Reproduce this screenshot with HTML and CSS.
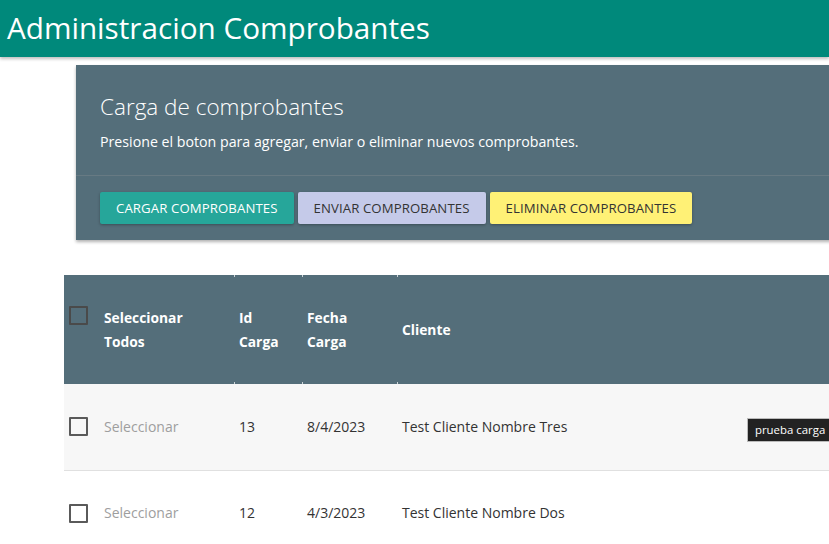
FILE: index.html
```html
<!DOCTYPE html>
<html lang="es">
<head>
<meta charset="utf-8">
<title>Administracion Comprobantes</title>
<link rel="stylesheet" href="styles.css">
</head>
<body>
<header class="topbar">
  <h1 class="topbar-title">Administracion Comprobantes</h1>
</header>
<main class="main">
  <section class="card">
    <div class="card-content">
      <h2 class="card-title">Carga de comprobantes</h2>
      <p class="card-text">Presione el boton para agregar, enviar o eliminar nuevos comprobantes.</p>
    </div>
    <div class="card-action">
      <button class="btn btn-teal">CARGAR COMPROBANTES</button>
      <button class="btn btn-indigo">ENVIAR COMPROBANTES</button>
      <button class="btn btn-yellow">ELIMINAR COMPROBANTES</button>
    </div>
  </section>
  <table class="grid">
    <thead>
      <tr>
        <th class="col-check"><span class="check check-head"></span></th>
        <th class="col-sel">Seleccionar<br>Todos</th>
        <th class="col-id tick">Id<br>Carga</th>
        <th class="col-fecha tick">Fecha<br>Carga</th>
        <th class="col-cliente tick">Cliente</th>
        <th class="col-rest"></th>
      </tr>
    </thead>
    <tbody>
      <tr class="row-alt">
        <td class="col-check"><span class="check"></span></td>
        <td class="col-sel muted">Seleccionar</td>
        <td class="col-id">13</td>
        <td class="col-fecha">8/4/2023</td>
        <td class="col-cliente">Test Cliente Nombre Tres</td>
        <td class="col-rest"><span class="tooltip">prueba carga</span></td>
      </tr>
      <tr>
        <td class="col-check"><span class="check"></span></td>
        <td class="col-sel muted">Seleccionar</td>
        <td class="col-id">12</td>
        <td class="col-fecha">4/3/2023</td>
        <td class="col-cliente">Test Cliente Nombre Dos</td>
        <td class="col-rest"></td>
      </tr>
    </tbody>
  </table>
</main>
</body>
</html>
```
FILE: styles.css
```css
* { box-sizing: border-box; }
html, body { margin: 0; padding: 0; }
body {
  font-family: "Open Sans", "Noto Sans", sans-serif;
  color: #333;
  background: #fff;
  overflow: hidden;
  width: 829px;
}
.topbar {
  height: 57px;
  background: #00897b;
  box-shadow: 0 2px 3px rgba(0,0,0,0.25);
  padding: 0 7px;
  display: flex;
  align-items: center;
  position: relative;
  z-index: 2;
}
.topbar-title {
  margin: 0 0 3px;
  font-weight: 400;
  font-size: 29.7px;
  color: #fff;
}
.main {
  padding-top: 8px;
}
.card {
  margin-left: 76px;
  width: 800px;
  background: #546e7a;
  box-shadow: 0 2px 3px rgba(0,0,0,0.3);
  color: #fff;
}
.card-content {
  padding: 27px 24px 23px;
  border-bottom: 1px solid rgba(160,160,160,0.25);
}
.card-title {
  margin: 0;
  font-weight: 300;
  font-size: 22.5px;
  line-height: 30px;
}
.card-text {
  margin: 10px 0 0;
  font-size: 14.2px;
  line-height: 20px;
}
.card-action {
  padding: 16px 24px;
  display: flex;
  gap: 4px;
}
.btn {
  height: 32px;
  border: 0;
  border-radius: 2px;
  padding: 0 16px;
  font-family: inherit;
  font-size: 13.2px;
  letter-spacing: 0.1px;
  box-shadow: 0 1px 3px rgba(0,0,0,0.3);
}
.btn-teal { background: #26a69a; color: #fff; }
.btn-indigo { background: #c5cae9; color: #333; }
.btn-yellow { background: #fff176; color: #333; }
.grid {
  margin: 35px 0 0 64px;
  width: 780px;
  border-collapse: collapse;
  font-size: 14px;
}
.grid th, .grid td { padding: 0 0 0 5px; }
.grid thead th {
  background: #546e7a;
  color: #fff;
  font-weight: 700;
  text-align: left;
  height: 109px;
  line-height: 24px;
  vertical-align: middle;
  font-size: 13.8px;
  position: relative;
}
.tick::before, .tick::after {
  content: "";
  position: absolute;
  left: 0;
  width: 1px;
  height: 2px;
  background: rgba(255,255,255,0.7);
}
.tick::before { top: 0; }
.tick::after { bottom: 0; }
.grid td {
  height: 86px;
  vertical-align: middle;
  border-bottom: 1px solid #e0e0e0;
  line-height: 20px;
}
.row-alt td { background: #f7f7f7; }
.col-check { width: 35px; }
.col-sel { width: 135px; }
.col-id { width: 68px; }
.col-fecha { width: 95px; }
.col-cliente { width: 300px; }
.col-rest { position: relative; }
.check {
  display: block;
  width: 19px;
  height: 19px;
  border: 2px solid #5a5a5a;
  border-radius: 1px;
}
.check-head { margin-top: -24px; border-color: #4a4a4a; }
.muted { color: #9e9e9e; }
.tooltip {
  position: absolute;
  left: 50px;
  top: 34px;
  background: #222;
  color: #fff;
  font-size: 11.4px;
  line-height: 18px;
  padding: 2px 7px;
  border: 1px solid #bbb;
  white-space: nowrap;
}
```
